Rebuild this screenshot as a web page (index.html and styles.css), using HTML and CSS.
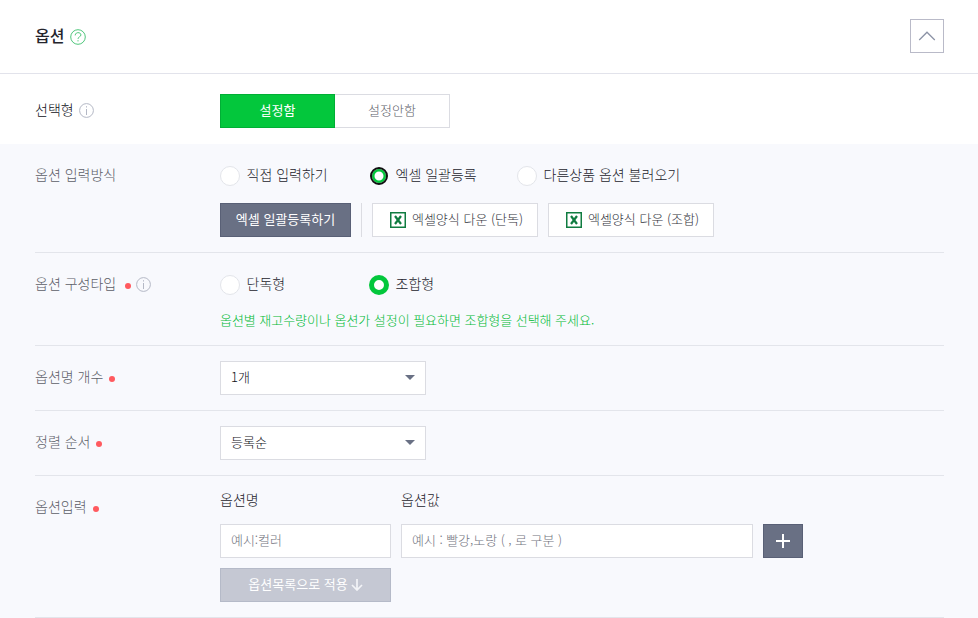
FILE: index.html
```
<!DOCTYPE html>
<html lang="ko">
<head>
  <meta charset="UTF-8">
  <meta name="viewport" content="width=device-width, initial-scale=1.0">
  <title>옵션</title>
  <link rel="stylesheet" href="styles.css">
</head>
<body>
  <header class="section-header">
    <h1>옵션</h1>
    <svg class="icon-help" width="16" height="16" viewBox="0 0 16 16" fill="none" stroke="#4fc77c">
      <circle cx="8" cy="8" r="7.3"/>
      <path d="M5.2 6.4C5.2 2.7 10.9 2.8 10.9 6C10.9 7.9 8 7.7 8 9.9M8 11.2V12.4"/>
    </svg>
    <button type="button" class="btn-fold" aria-label="접기">
      <svg width="18" height="10" viewBox="0 0 18 10" fill="none" stroke="#8c93a6" stroke-width="1.3">
        <path d="M1.2 9L9 1.2L16.8 9"/>
      </svg>
    </button>
  </header>

  <div class="type-row">
    <div class="label label-dark">
      선택형
      <svg class="icon-info" width="15" height="15" viewBox="0 0 15 15" fill="none" stroke="#b4b8c5">
        <circle cx="7.5" cy="7.5" r="6.9"/>
        <path d="M7.5 3.2V4.5M7.5 6V12"/>
      </svg>
    </div>
    <div class="toggle">
      <button type="button" class="toggle-btn active">설정함</button>
      <button type="button" class="toggle-btn">설정안함</button>
    </div>
  </div>

  <form class="option-form">
    <div class="row">
      <div class="label">옵션 입력방식</div>
      <div class="content">
        <div class="radios">
          <label class="radio"><input type="radio" name="inputType"><span>직접 입력하기</span></label>
          <label class="radio"><input type="radio" name="inputType" class="focused" checked><span>엑셀 일괄등록</span></label>
          <label class="radio"><input type="radio" name="inputType"><span>다른상품 옵션 불러오기</span></label>
        </div>
        <div class="excel-buttons">
          <button type="button" class="btn btn-dark">엑셀 일괄등록하기</button>
          <span class="bar"></span>
          <button type="button" class="btn btn-excel">
            <svg class="icon-excel" width="16" height="16" viewBox="0 0 16 16" fill="none" stroke="#107c41">
              <rect x="0.75" y="0.75" width="14.5" height="14.5" fill="#fff" stroke-width="1.5"/>
              <path d="M5 4L11 12M11 4L5 12" stroke-width="2.2"/>
            </svg>
            <span>엑셀양식 다운 (단독)</span>
          </button>
          <button type="button" class="btn btn-excel">
            <svg class="icon-excel" width="16" height="16" viewBox="0 0 16 16" fill="none" stroke="#107c41">
              <rect x="0.75" y="0.75" width="14.5" height="14.5" fill="#fff" stroke-width="1.5"/>
              <path d="M5 4L11 12M11 4L5 12" stroke-width="2.2"/>
            </svg>
            <span>엑셀양식 다운 (조합)</span>
          </button>
        </div>
      </div>
    </div>

    <div class="row">
      <div class="label">
        옵션 구성타입 <i class="dot dot-wide"></i>
        <svg class="icon-info" width="15" height="15" viewBox="0 0 15 15" fill="none" stroke="#b4b8c5">
          <circle cx="7.5" cy="7.5" r="6.9"/>
          <path d="M7.5 3.2V4.5M7.5 6V12"/>
        </svg>
      </div>
      <div class="content">
        <div class="radios">
          <label class="radio"><input type="radio" name="optionType"><span>단독형</span></label>
          <label class="radio"><input type="radio" name="optionType" checked><span>조합형</span></label>
        </div>
        <p class="hint">옵션별 재고수량이나 옵션가 설정이 필요하면 조합형을 선택해 주세요.</p>
      </div>
    </div>

    <div class="row">
      <div class="label">옵션명 개수 <i class="dot"></i></div>
      <div class="content">
        <div class="select">
          <select name="optionCount"><option>1개</option></select>
        </div>
      </div>
    </div>

    <div class="row">
      <div class="label">정렬 순서 <i class="dot"></i></div>
      <div class="content">
        <div class="select">
          <select name="sortOrder"><option>등록순</option></select>
        </div>
      </div>
    </div>

    <div class="row">
      <div class="label">옵션입력 <i class="dot"></i></div>
      <div class="content option-grid">
        <label class="column-title" for="optionName">옵션명</label>
        <label class="column-title" for="optionValue">옵션값</label>
        <span></span>
        <input type="text" id="optionName" placeholder="예시:컬러">
        <input type="text" id="optionValue" placeholder="예시 : 빨강,노랑 ( , 로 구분 )">
        <button type="button" class="btn btn-dark" aria-label="추가">
          <svg width="14" height="14" viewBox="0 0 14 14" stroke="#fff" stroke-width="2">
            <path d="M7 0V14M0 7H14"/>
          </svg>
        </button>
        <button type="button" class="btn btn-apply">
          <span>옵션목록으로 적용</span>
          <svg class="icon-down" width="12" height="12" viewBox="0 0 12 12" fill="none" stroke="#f3f4f7" stroke-width="1.7">
            <path d="M6 0V11M1 6L6 11L11 6"/>
          </svg>
        </button>
      </div>
    </div>
  </form>
</body>
</html>
```
FILE: styles.css
```
* {
  box-sizing: border-box;
}
body {
  margin: 0;
  font-family: "Noto Sans CJK KR", sans-serif;
  font-size: 14px;
  font-weight: 300;
  line-height: 20px;
  color: #24242c;
  background-color: #fff;
}
button, input, select {
  font-family: inherit;
  font-size: 13px;
  font-weight: inherit;
  margin: 0;
  border-radius: 0;
}
button {
  display: flex;
  align-items: center;
  justify-content: center;
  height: 34px;
  padding: 0 0 2px;
  line-height: 20px;
  cursor: pointer;
}

/* header */
.section-header {
  display: flex;
  align-items: center;
  height: 74px;
  padding: 0 34px 0 35px;
  border-bottom: 1px solid #e2e3eb;
}
h1 {
  margin: 0 6px 4px 0;
  font-size: 16px;
  font-weight: 500;
  line-height: 24px;
}
.btn-fold {
  width: 34px;
  margin-left: auto;
  margin-bottom: 1px;
  padding: 0;
  border: 1px solid #b9bac8;
  background-color: #fff;
}

.label {
  display: flex;
  flex: none;
  align-items: center;
  width: 185px;
  height: 34px;
  padding-bottom: 5px;
  color: #5c5e68;
}
.label-dark {
  color: #101018;
}
.icon-info {
  margin: 3px 0 0 5px;
}
.dot {
  width: 6px;
  height: 6px;
  margin: 6px 0 0 6px;
  border-radius: 50%;
  background-color: #ff5a5f;
}
.dot-wide {
  margin-left: 9px;
}

/* on / off toggle */
.type-row {
  display: flex;
  height: 70px;
  padding: 20px 34px 16px 35px;
}
.toggle {
  display: flex;
}
.toggle-btn {
  width: 115px;
  border: 1px solid #dbdce2;
  border-left: 0;
  background-color: #fff;
  color: #5c5e68;
}
.toggle-btn.active {
  border: 1px solid #00af35;
  background-color: #03c73c;
  font-weight: 400;
  color: #fff;
}

/* option rows */
.option-form {
  padding: 0 34px 0 35px;
  background-color: #f8f9fd;
}
.row {
  display: flex;
  padding: 15px 0;
  border-bottom: 1px solid #e3e5eb;
}
.radios {
  display: grid;
  grid-template-columns: 149px 148px auto;
  height: 34px;
}
.radio {
  display: flex;
  align-items: center;
  color: #24242c;
}
.radio span {
  margin: 0 0 5px 6.5px;
}
.radio input {
  appearance: none;
  width: 20px;
  height: 20px;
  border: 1px solid #e3e5ea;
  border-radius: 50%;
  background-color: #fff;
}
.radio input:checked {
  border: 5px solid #03c73c;
}
.radio input.focused {
  width: 18px;
  height: 18px;
  margin: 0 1px;
  border: 2px solid #101010;
  box-shadow: inset 0 0 0 2.5px #03c73c;
}

.excel-buttons {
  display: flex;
  gap: 10px;
  margin-top: 10px;
}
.bar {
  width: 1px;
  background-color: #dbdce2;
}
.btn-dark {
  border: 1px solid #596076;
  background-color: #697084;
  font-weight: 400;
  color: #fff;
}
.excel-buttons .btn-dark {
  width: 131px;
}
.btn-excel {
  gap: 6px;
  width: 166px;
  padding-left: 3px;
  border: 1px solid #dbdce2;
  background-color: #fff;
  color: #33343c;
}
.icon-excel {
  margin-top: 2px;
}
.hint {
  margin: 8px 0 0;
  font-size: 13px;
  letter-spacing: -0.04px;
  color: #00b935;
}

.select {
  position: relative;
  width: 206px;
}
/* arrow over the native select */
.select::after {
  content: "";
  position: absolute;
  top: 14px;
  right: 11px;
  border: 5px solid transparent;
  border-top-color: #697084;
  border-bottom: 0;
  pointer-events: none;
}
select {
  display: block;
  appearance: none;
  width: 100%;
  height: 34px;
  padding: 0 30px 3px 10px;
  border: 1px solid #dbdce2;
  background-color: #fff;
  color: #101018;
}

.option-grid {
  display: grid;
  grid-template-columns: 171px 352px 40px;
  grid-template-rows: 23px 34px 34px;
  gap: 10px;
}
.column-title {
  line-height: 16px;
  color: #24242c;
}
input[type="text"] {
  width: 100%;
  height: 34px;
  padding: 0 10px 3px;
  border: 1px solid #dbdce2;
  background-color: #fff;
  letter-spacing: -0.05px;
}
input::placeholder {
  color: #72747e;
}
.option-grid .btn-dark {
  padding: 0;
}
.btn-apply {
  gap: 3px;
  border: 1px solid #b5bac8;
  background-color: #c5c8d3;
  font-weight: 400;
  color: #fff;
}
.icon-down {
  margin-top: 2px;
}
```
